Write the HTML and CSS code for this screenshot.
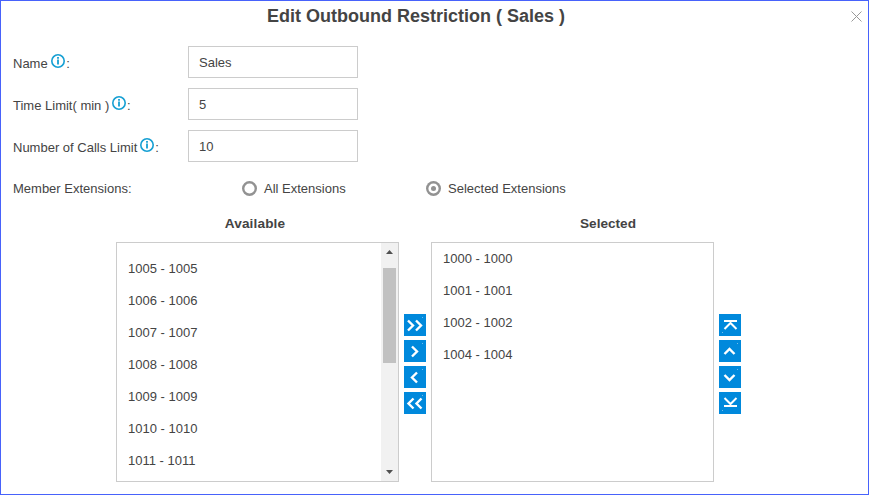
FILE: index.html
```html
<!DOCTYPE html>
<html lang="en">
<head>
<meta charset="utf-8">
<title>Edit Outbound Restriction</title>
<link rel="stylesheet" href="styles.css">
</head>
<body>
<svg class="defs" width="0" height="0">
  <symbol id="info" viewBox="0 0 14 14"><circle cx="7" cy="7" r="6.2" fill="none" stroke="#159fd3" stroke-width="1.6"/><path d="M7 3v1.7M7 5.6v5" stroke="#159fd3" stroke-width="1.8"/></symbol>
</svg>
<main class="dialog">
  <header class="titlebar">
    <h1>Edit Outbound Restriction ( Sales )</h1>
    <svg class="close" width="11" height="11" viewBox="0 0 11 11"><path d="M.5.5l10 10M10.5.5l-10 10" stroke="#999" stroke-width="1"/></svg>
  </header>
  <form class="form">
    <div class="row"><label class="label" for="name">Name <svg class="info"><use href="#info"/></svg>:</label><input id="name" value="Sales"></div>
    <div class="row"><label class="label" for="time">Time Limit( min ) <svg class="info tight"><use href="#info"/></svg>:</label><input id="time" value="5"></div>
    <div class="row"><label class="label" for="calls">Number of Calls Limit<svg class="info near"><use href="#info"/></svg>:</label><input id="calls" value="10"></div>
    <div class="members">
      <span class="members-label">Member Extensions:</span>
      <span class="option all"><i class="radio"></i>All Extensions</span>
      <span class="option"><i class="radio checked"></i>Selected Extensions</span>
    </div>
  </form>
  <section class="transfer">
    <div class="column">
      <h2 class="left-heading">Available</h2>
      <div class="list available">
        <ul><li>1005 - 1005</li><li>1006 - 1006</li><li>1007 - 1007</li><li>1008 - 1008</li><li>1009 - 1009</li><li>1010 - 1010</li><li>1011 - 1011</li></ul>
        <div class="scrollbar">
          <svg width="7" height="4" viewBox="0 0 7 4"><path d="M0 4L3.5 0 7 4z" fill="#505050"/></svg>
          <div class="thumb"></div>
          <svg class="down" width="7" height="4" viewBox="0 0 7 4"><path d="M0 0L3.5 4 7 0z" fill="#505050"/></svg>
        </div>
      </div>
    </div>
    <div class="buttons">
      <button><svg viewBox="0 0 22 22"><path d="M4 6.5l5 5-5 5M12 6.5l5 5-5 5"/><path class="dot" d="M18 3h1v1h-1z"/></svg></button>
      <button><svg viewBox="0 0 22 22"><path d="M8 6.5l5 5-5 5"/><path class="dot" d="M18 3h1v1h-1z"/></svg></button>
      <button><svg viewBox="0 0 22 22"><path d="M13 6.5l-5 5 5 5"/><path class="dot" d="M18 3h1v1h-1z"/></svg></button>
      <button><svg viewBox="0 0 22 22"><path d="M9.5 6.5l-5 5 5 5M17.5 6.5l-5 5 5 5"/><path class="dot" d="M18 3h1v1h-1z"/></svg></button>
    </div>
    <div class="column">
      <h2>Selected</h2>
      <div class="list selected">
        <ul><li>1000 - 1000</li><li>1001 - 1001</li><li>1002 - 1002</li><li>1004 - 1004</li></ul>
      </div>
    </div>
    <div class="buttons">
      <button><svg class="thin" viewBox="0 0 22 22"><path d="M5 7h13M5.5 15l6-6 6 6"/><path class="dot" d="M3 18h1v1H3z"/></svg></button>
      <button><svg viewBox="0 0 22 22"><path d="M5.5 14l5-5 5 5"/><path class="dot" d="M18 3h1v1h-1z"/></svg></button>
      <button><svg viewBox="0 0 22 22"><path d="M5.5 9l5 5 5-5"/><path class="dot" d="M18 3h1v1h-1z"/></svg></button>
      <button><svg class="thin" viewBox="0 0 22 22"><path d="M5 14h13M5.5 6l6 6 6-6"/><path class="dot" d="M3 18h1v1H3z"/></svg></button>
    </div>
  </section>
</main>
</body>
</html>
```
FILE: styles.css
```css
* { box-sizing: border-box; }
body { margin: 0; font: 13px/16px "Liberation Sans", Arial, sans-serif; color: #444; background: #fff; }
.defs { display: block; }
.dialog { width: 869px; height: 495px; border: 1px solid #4762fb; overflow: hidden; }
.titlebar { height: 45px; display: grid; grid-template-columns: 1fr auto; padding: 5px 6px 0 0; align-items: start; }
h1 { margin: 0 0 0 266px; font-size: 18px; line-height: 20px; white-space: nowrap; }
.close { margin-top: 5px; }
.form { padding-left: 12px; }
.row { display: flex; align-items: center; height: 32px; margin-bottom: 10px; }
.label { width: 175px; padding-top: 2px; white-space: nowrap; }
.info { width: 14px; height: 14px; margin: 0 1px 0 0; vertical-align: 0; }
.info.tight { margin-left: -1px; }
.info.near { margin-left: 3px; }
input { width: 170px; height: 32px; border: 1px solid #ccc; padding: 0 10px; font: inherit; color: inherit; outline: 0; }
.members { display: flex; align-items: center; height: 32px; padding-top: 2px; }
.members-label { width: 229px; }
.option { display: flex; align-items: center; }
.option.all { width: 184px; }
.radio { width: 15px; height: 15px; margin-right: 7px; border-radius: 50%; box-shadow: inset 0 0 0 2.4px #929292; display: grid; place-items: center; margin-bottom: 1px; }
.radio.checked::after { content: ""; width: 5px; height: 5px; border-radius: 50%; background: #929292; }
.transfer { display: flex; padding-left: 115px; }
.column { width: 283px; }
h2 { margin: 0; padding: 12px 0 0 71px; height: 38px; font-size: 13.6px; line-height: 16px; text-align: center; }
h2.left-heading { padding-left: 0; padding-right: 5px; font-size: 13.6px; letter-spacing: .15px; }
.list { height: 240px; border: 1px solid #ccc; display: flex; justify-content: space-between; overflow: hidden; }
ul { list-style: none; margin: 0; padding: 0 0 0 11px; }
.available ul { padding-top: 10px; }
li { height: 32px; line-height: 32px; }
.scrollbar { width: 17px; background: #f1f1f1; display: flex; flex-direction: column; align-items: center; padding: 7px 0; }
.thumb { width: 13px; height: 95px; margin-top: 14px; background: #c1c1c1; }
.down { margin-top: auto; }
.buttons { width: 32px; padding: 110px 0 0 5px; display: flex; flex-direction: column; gap: 4px; }
button { width: 22px; height: 22px; border: 0; padding: 0; background: #0089dc; }
button svg { display: block; width: 22px; height: 22px; fill: none; stroke: #fff; stroke-width: 2.4; }
button .thin { stroke-width: 2; }
button .dot { fill: #6fbcec; stroke: none; }
```
